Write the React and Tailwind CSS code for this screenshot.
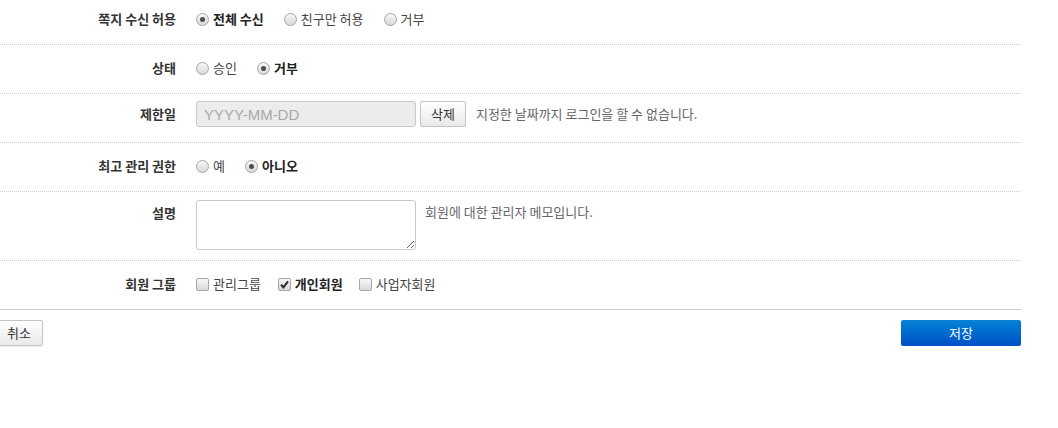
import React, { useState } from "react";

const Radio = ({ checked }) => (
  <span className="w-[13px] h-[13px] shrink-0 rounded-full border border-[#a6a6a6] bg-gradient-to-b from-[#f7f7f7] to-[#d9d9d9] flex items-center justify-center">
    {checked && <span className="w-[5px] h-[5px] rounded-full bg-[#4d4d4d]" />}
  </span>
);

const Checkbox = ({ checked }) => (
  <span className="w-[13px] h-[13px] shrink-0 rounded-[2px] border border-[#a6a6a6] bg-gradient-to-b from-[#f7f7f7] to-[#d9d9d9] flex items-center justify-center">
    {checked && (
      <svg width="9" height="9" viewBox="0 0 9 9">
        <path d="M1 4.6 L3.4 7.4 L8 1.4" fill="none" stroke="#2b2b2b" strokeWidth="2" />
      </svg>
    )}
  </span>
);

const Option = ({ label, checked, box, gap = "mr-[20px]" }) => (
  <label className={`flex items-center gap-[4px] ${gap} cursor-pointer`}>
    {box ? <Checkbox checked={checked} /> : <Radio checked={checked} />}
    <span className={checked ? "font-bold text-[#222]" : "text-[#444]"}>{label}</span>
  </label>
);

const Row = ({ label, top, children, className = "" }) => (
  <div className={`flex border-b border-dotted border-[#cfcfcf] ${className}`}>
    <div
      className={`w-[176px] shrink-0 text-right font-bold text-[#333] ${
        top ? "leading-[26px]" : "flex items-center justify-end h-[32px]"
      }`}
    >
      {label}
    </div>
    <div className={`ml-[20px] flex ${top ? "items-start" : "items-center h-[32px]"}`}>{children}</div>
  </div>
);

export default function App() {
  const [memo, setMemo] = useState("");

  return (
    <div className="w-[1058px] h-[428px] bg-white overflow-hidden font-['Noto_Sans_CJK_KR','Liberation_Sans',sans-serif] text-[13px] text-[#333]">
      <div className="w-[1021px]">
        <Row label="쪽지 수신 허용" className="pt-[3px] pb-[9px]">
          <Option label="전체 수신" checked />
          <Option label="친구만 허용" />
          <Option label="거부" />
        </Row>

        <Row label="상태" className="pt-[7px] pb-[9px]">
          <Option label="승인" />
          <Option label="거부" checked />
        </Row>

        <Row label="제한일" top className="pt-[7px] pb-[15px]">
          <input
            readOnly
            placeholder="YYYY-MM-DD"
            className="w-[220px] h-[26px] px-[7px] rounded-[3px] border border-[#c8c8c8] bg-[#ececec] text-[15px] font-['Liberation_Sans',sans-serif] placeholder:text-[#a8a8a8] outline-none"
          />
          <button className="ml-[4px] h-[26px] px-[10px] rounded-[2px] border border-[#c4c4c4] bg-gradient-to-b from-[#ffffff] to-[#e9e9e9] text-[13px] text-[#333] leading-[24px]">
            삭제
          </button>
          <span className="ml-[10px] leading-[26px] text-[#666]">지정한 날짜까지 로그인을 할 수 없습니다.</span>
        </Row>

        <Row label="최고 관리 권한" className="pt-[7px] pb-[9px]">
          <Option label="예" />
          <Option label="아니오" checked />
        </Row>

        <Row label="설명" top className="pt-[8px] pb-[10px]">
          <textarea
            value={memo}
            onChange={(e) => setMemo(e.target.value)}
            className="block w-[220px] h-[50px] rounded-[3px] border border-[#c8c8c8] bg-white outline-none"
          />
          <span className="ml-[9px] leading-[24px] text-[#666]">회원에 대한 관리자 메모입니다.</span>
        </Row>

        <div className="flex border-b border-[#cccccc] pt-[7px] pb-[9px]">
          <div className="w-[176px] shrink-0 h-[32px] flex items-center justify-end font-bold text-[#333]">회원 그룹</div>
          <div className="ml-[20px] h-[32px] flex items-center">
            <Option box label="관리그룹" gap="mr-[17px]" />
            <Option box label="개인회원" checked gap="mr-[16px]" />
            <Option box label="사업자회원" />
          </div>
        </div>

        <div className="flex justify-between mt-[10px]">
          <button className="-ml-[5px] h-[26px] px-[11px] rounded-[2px] border border-[#c4c4c4] bg-gradient-to-b from-[#ffffff] to-[#e9e9e9] text-[13px] text-[#333] shadow-[0_1px_1px_rgba(0,0,0,0.08)]">
            취소
          </button>
          <button className="w-[120px] h-[26px] rounded-[2px] bg-gradient-to-b from-[#0a82d6] to-[#004fc6] text-white text-[13px]">
            저장
          </button>
        </div>
      </div>
    </div>
  );
}
